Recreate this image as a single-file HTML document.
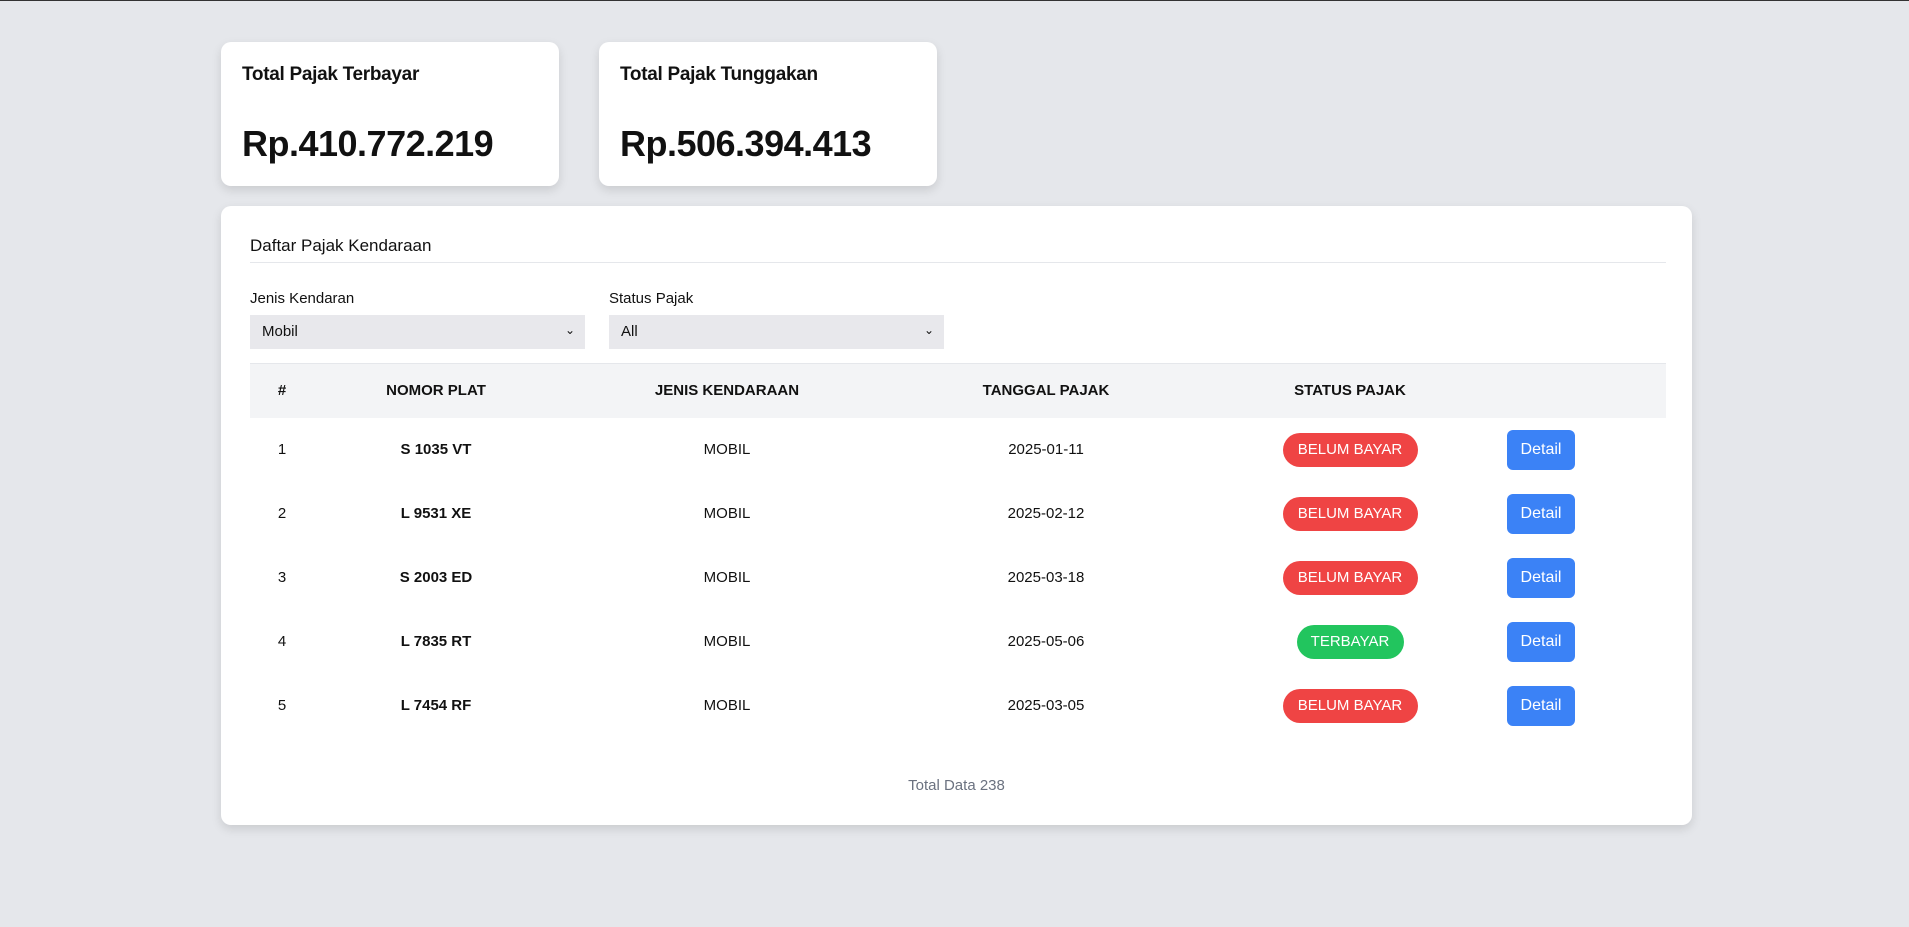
<!DOCTYPE html>
<html><head><meta charset="utf-8"><style>
*{box-sizing:border-box;margin:0;padding:0}
body{width:1909px;height:927px;background:#e5e7eb;font-family:"Liberation Sans",sans-serif;color:#111;border-top:1px solid #333;position:relative;overflow:hidden}
.card{position:absolute;top:41px;width:338px;height:144px;background:#fff;border-radius:10px;box-shadow:0 4px 10px rgba(0,0,0,.12)}
.card h3{position:absolute;left:21px;top:22px;font-size:19px;font-weight:bold;letter-spacing:-0.3px}
.card .v{position:absolute;left:21px;top:81px;font-size:36px;font-weight:bold;letter-spacing:-0.5px}
.panel{position:absolute;left:221px;top:205px;width:1471px;height:619px;background:#fff;border-radius:10px;box-shadow:0 4px 10px rgba(0,0,0,.12)}
.t{position:absolute;left:29px;top:30px;font-size:17px}
.line{position:absolute;left:29px;top:56px;width:1416px;height:1px;background:#e5e7eb}
.lbl{position:absolute;top:84px;font-size:15px}
.sel{position:absolute;top:109px;width:335px;height:34px;background:#e8e8ec;font-size:15px;padding:8px 12px}
.sel span{position:absolute;right:10px;top:8px;font-size:12px}
table{position:absolute;left:29px;top:157px;width:1416px;border-collapse:collapse;font-size:15px}
th{background:#f3f4f6;height:54px;font-weight:bold;border-top:1px solid #e5e7eb}
td{height:64px;text-align:center}
td.b{font-weight:bold}
.badge{display:inline-block;width:135px;height:34px;line-height:34px;border-radius:17px;color:#fff;background:#ef4444;font-size:15px}
.g{background:#22c55e;width:107px}
.btn{display:inline-block;width:68px;height:40px;line-height:40px;border-radius:6px;background:#3b82f6;color:#fff;font-size:16px;text-align:center}
.tot{position:absolute;top:571px;left:0;width:1471px;text-align:center;color:#6b7280;font-size:15px}
</style></head><body>
<div class="card" style="left:221px"><h3>Total Pajak Terbayar</h3><div class="v">Rp.410.772.219</div></div>
<div class="card" style="left:599px"><h3>Total Pajak Tunggakan</h3><div class="v">Rp.506.394.413</div></div>
<div class="panel">
<div class="t">Daftar Pajak Kendaraan</div><div class="line"></div>
<div class="lbl" style="left:29px">Jenis Kendaran</div>
<div class="lbl" style="left:388px">Status Pajak</div>
<div class="sel" style="left:29px">Mobil<span>⌄</span></div>
<div class="sel" style="left:388px">All<span>⌄</span></div>
<table>
<colgroup><col style="width:64px"><col style="width:244px"><col style="width:338px"><col style="width:300px"><col style="width:308px"><col style="width:162px"></colgroup>
<tr><th>#</th><th>NOMOR PLAT</th><th>JENIS KENDARAAN</th><th>TANGGAL PAJAK</th><th>STATUS PAJAK</th><th></th></tr>
<tr><td>1</td><td class="b">S 1035 VT</td><td>MOBIL</td><td>2025-01-11</td><td><span class="badge">BELUM BAYAR</span></td><td style="text-align:left;padding-left:3px"><span class="btn">Detail</span></td></tr>
<tr><td>2</td><td class="b">L 9531 XE</td><td>MOBIL</td><td>2025-02-12</td><td><span class="badge">BELUM BAYAR</span></td><td style="text-align:left;padding-left:3px"><span class="btn">Detail</span></td></tr>
<tr><td>3</td><td class="b">S 2003 ED</td><td>MOBIL</td><td>2025-03-18</td><td><span class="badge">BELUM BAYAR</span></td><td style="text-align:left;padding-left:3px"><span class="btn">Detail</span></td></tr>
<tr><td>4</td><td class="b">L 7835 RT</td><td>MOBIL</td><td>2025-05-06</td><td><span class="badge g">TERBAYAR</span></td><td style="text-align:left;padding-left:3px"><span class="btn">Detail</span></td></tr>
<tr><td>5</td><td class="b">L 7454 RF</td><td>MOBIL</td><td>2025-03-05</td><td><span class="badge">BELUM BAYAR</span></td><td style="text-align:left;padding-left:3px"><span class="btn">Detail</span></td></tr>
</table>
<div class="tot">Total Data 238</div>
</div>
</body></html>
